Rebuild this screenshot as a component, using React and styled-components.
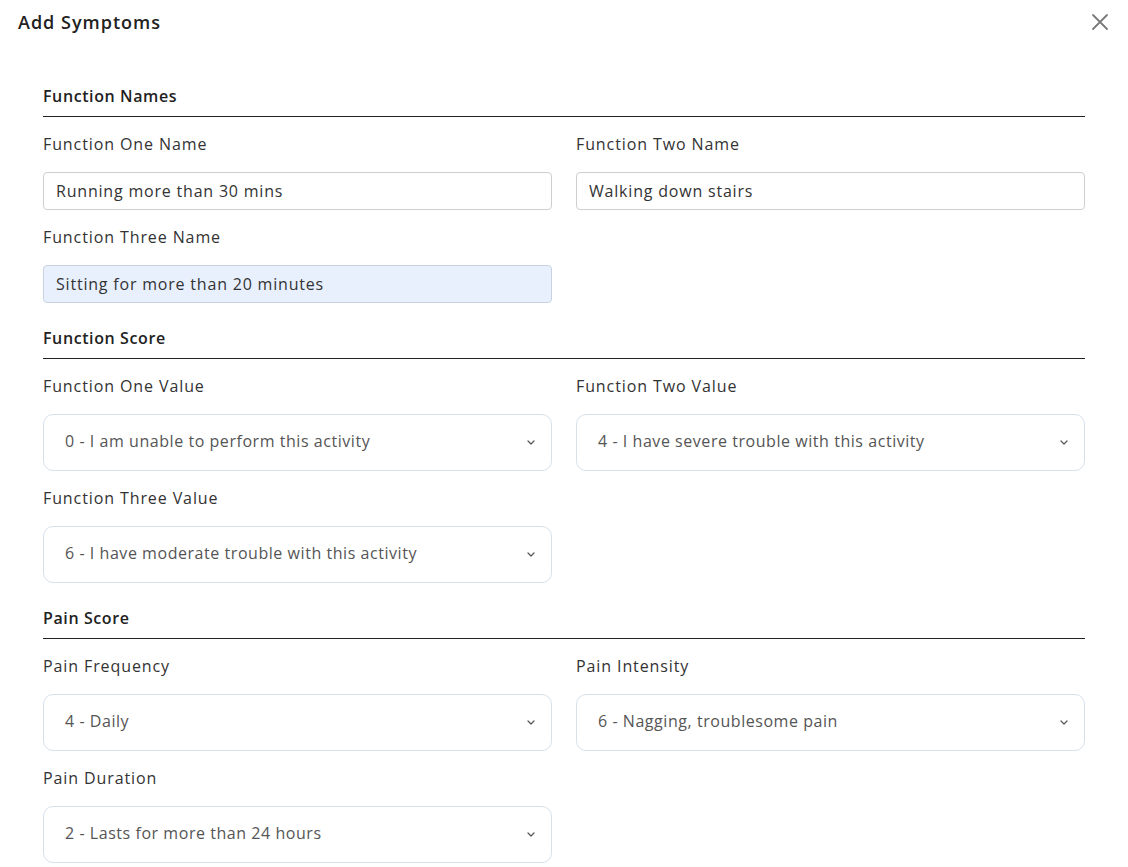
import React from "react";
import styled, { createGlobalStyle } from "styled-components";

const Global = createGlobalStyle`
  body {
    margin: 0;
    background: #fff;
    font-family: "Open Sans", "Liberation Sans", sans-serif;
    color: #222;
  }
`;

const Modal = styled.div`
  width: 1128px;
  min-height: 867px;
  box-sizing: border-box;
  padding: 0 43px 40px 43px;
`;

const Header = styled.div`
  display: flex;
  justify-content: space-between;
  align-items: center;
  height: 44px;
  margin: 0 -43px 0 -25px;
  padding: 0 18px 0 0;
`;

const Title = styled.h2`
  margin: 0;
  font-size: 18px;
  font-weight: 600;
  color: #222;
  letter-spacing: 1px;
`;

const Close = styled.button`
  border: 0;
  background: none;
  padding: 0;
  width: 20px;
  height: 20px;
  display: flex;
  align-items: center;
  justify-content: center;
  cursor: pointer;
`;

const Section = styled.section`
  margin-top: ${(p) => (p.first ? "42px" : "25px")};
`;

const SectionTitle = styled.h3`
  margin: 0;
  font-size: 16px;
  line-height: 20px;
  font-weight: 600;
  color: #222;
  padding-bottom: 10px;
  border-bottom: 1px solid #222;
  letter-spacing: 0.6px;
`;

const Grid = styled.div`
  display: grid;
  grid-template-columns: 1fr 1fr;
  column-gap: 24px;
  row-gap: 17px;
  margin-top: 17px;
`;

const Field = styled.div`
  display: flex;
  flex-direction: column;
  gap: 18px;
`;

const Label = styled.label`
  font-size: 16px;
  line-height: 20px;
  font-weight: 500;
  color: #333;
  letter-spacing: 0.9px;
`;

const TextInput = styled.input`
  height: 38px;
  box-sizing: border-box;
  border: 1px solid ${(p) => (p.filled ? "#c9d3e0" : "#cfcfcf")};
  border-radius: 4px;
  background: ${(p) => (p.filled ? "#e8f0fe" : "#fff")};
  padding: 0 12px 1px;
  font-family: inherit;
  font-size: 16px;
  color: #333;
  letter-spacing: 0.8px;
  outline: none;
`;

const SelectBox = styled.div`
  height: 57px;
  box-sizing: border-box;
  border: 1px solid #d6e1ec;
  border-radius: 10px;
  background: #fff;
  display: flex;
  align-items: center;
  justify-content: space-between;
  padding: 0 16px 0 21px;
  font-size: 16px;
  color: #555;
  letter-spacing: 0.55px;
`;

const Value = styled.span`
  margin-top: -4px;
`;

const Chevron = () => (
  <svg width="8" height="5" viewBox="0 0 8 5" fill="none">
    <polyline points="1,1 4,4 7,1" stroke="#555" strokeWidth="1.2" strokeLinecap="round" strokeLinejoin="round" />
  </svg>
);

const Select = ({ value }) => (
  <SelectBox>
    <Value>{value}</Value>
    <Chevron />
  </SelectBox>
);

const sections = [
  {
    title: "Function Names",
    fields: [
      { label: "Function One Name", input: "Running more than 30 mins" },
      { label: "Function Two Name", input: "Walking down stairs" },
      { label: "Function Three Name", input: "Sitting for more than 20 minutes", filled: true },
    ],
  },
  {
    title: "Function Score",
    fields: [
      { label: "Function One Value", select: "0 - I am unable to perform this activity" },
      { label: "Function Two Value", select: "4 - I have severe trouble with this activity" },
      { label: "Function Three Value", select: "6 - I have moderate trouble with this activity" },
    ],
  },
  {
    title: "Pain Score",
    fields: [
      { label: "Pain Frequency", select: "4 - Daily" },
      { label: "Pain Intensity", select: "6 - Nagging, troublesome pain" },
      { label: "Pain Duration", select: "2 - Lasts for more than 24 hours" },
    ],
  },
];

export default function App() {
  return (
    <>
      <Global />
      <Modal>
        <Header>
          <Title>Add Symptoms</Title>
          <Close aria-label="Close">
            <svg width="18" height="18" viewBox="0 0 18 18">
              <path d="M2 2 L16 16 M16 2 L2 16" stroke="#7a7a7a" strokeWidth="1.8" strokeLinecap="round" />
            </svg>
          </Close>
        </Header>
        {sections.map((s, i) => (
          <Section key={s.title} first={i === 0}>
            <SectionTitle>{s.title}</SectionTitle>
            <Grid>
              {s.fields.map((f) => (
                <Field key={f.label}>
                  <Label>{f.label}</Label>
                  {f.select ? (
                    <Select value={f.select} />
                  ) : (
                    <TextInput defaultValue={f.input} filled={f.filled} readOnly />
                  )}
                </Field>
              ))}
            </Grid>
          </Section>
        ))}
      </Modal>
    </>
  );
}
